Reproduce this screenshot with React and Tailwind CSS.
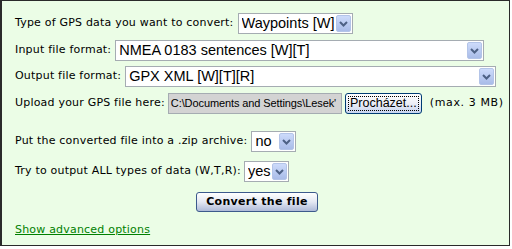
import React from "react";

function Arrow() {
  return (
    <div className="flex h-[17px] w-[15px] shrink-0 items-center justify-center rounded-[2px] border border-[#b3c4e8] bg-gradient-to-b from-[#cddbfb] to-[#a9bce8]">
      <svg width="9" height="6" viewBox="0 0 9 6">
        <path d="M1 1 L4.5 4.5 L8 1" fill="none" stroke="#4d6185" strokeWidth="2" />
      </svg>
    </div>
  );
}

function Select({ value, width }) {
  return (
    <div
      className={`flex h-[21px] shrink-0 items-center border border-[#a5acb2] bg-white pl-[3px] pr-[1px] ${width}`}
    >
      <span className="flex-1 truncate text-[14.5px] leading-none text-black [font-family:'Liberation_Sans',Arial,sans-serif]">
        {value}
      </span>
      <Arrow />
    </div>
  );
}

const label = "text-[11px] tracking-[0.2px] text-black whitespace-nowrap";

export default function App() {
  return (
    <div className="h-[249px] w-[512px] bg-white [font-family:'DejaVu_Sans',Verdana,sans-serif]">
      <div className="flex h-[246px] w-[510px] flex-col border-t border-r border-b border-l-2 border-[#2a2a2a] bg-[#ebfde6] pl-[13px] pt-[12px]">
        <div className="flex items-center gap-[4px]">
          <span className={label}>Type of GPS data you want to convert:</span>
          <Select value="Waypoints [W]" width="w-[115px]" />
        </div>
        <div className="mt-[6px] flex items-center gap-[4px]">
          <span className={label}>Input file format:</span>
          <Select value="NMEA 0183 sentences [W][T]" width="w-[369px]" />
        </div>
        <div className="mt-[5px] flex items-center gap-[4px]">
          <span className={label}>Output file format:</span>
          <Select value="GPX XML [W][T][R]" width="w-[371px]" />
        </div>
        <div className="mt-[6px] flex items-center gap-[3px]">
          <span className={label}>Upload your GPS file here:</span>
          <div className="flex h-[21px] w-[174px] shrink-0 items-center overflow-hidden border border-[#a5acb2] bg-[#d3d3d3] pl-[2px]">
            <span className="whitespace-nowrap text-[11px] tracking-[-0.1px] leading-none text-black [font-family:'Liberation_Sans',Arial,sans-serif]">
              C:\Documents and Settings\Lesek'
            </span>
          </div>
          <div className="flex h-[21px] w-[77px] shrink-0 items-center justify-center rounded-[3px] border border-[#003c74] bg-gradient-to-b from-[#ffffff] via-[#eceef6] to-[#c8d4f0]">
            <span className="border border-dotted border-black px-[1px] text-[12.5px] leading-[13px] text-black [font-family:'Liberation_Sans',Arial,sans-serif]">
              Procházet...
            </span>
          </div>
          <span className="ml-[5px] whitespace-nowrap text-[11px] tracking-[0.6px] text-black">(max. 3 MB)</span>
        </div>
        <div className="mt-[17px] flex items-center gap-[4px]">
          <span className={label}>Put the converted file into a .zip archive:</span>
          <Select value="no" width="w-[45px]" />
        </div>
        <div className="mt-[9px] flex items-center gap-[3px]">
          <span className={label}>Try to output ALL types of data (W,T,R):</span>
          <Select value="yes" width="w-[45px]" />
        </div>
        <div className="mt-[10px] flex justify-center pr-[10px]">
          <div className="flex h-[20px] w-[122px] items-center justify-center rounded-[3px] border border-[#3c5a8c] bg-gradient-to-b from-[#ffffff] via-[#e4e8f2] to-[#aebad8]">
            <span className="text-[11px] font-bold tracking-[0.3px] text-black">Convert the file</span>
          </div>
        </div>
        <div className="mt-[4px]">
          <span className="text-[11px] tracking-[0.2px] text-[#008000] underline">Show advanced options</span>
        </div>
      </div>
    </div>
  );
}
